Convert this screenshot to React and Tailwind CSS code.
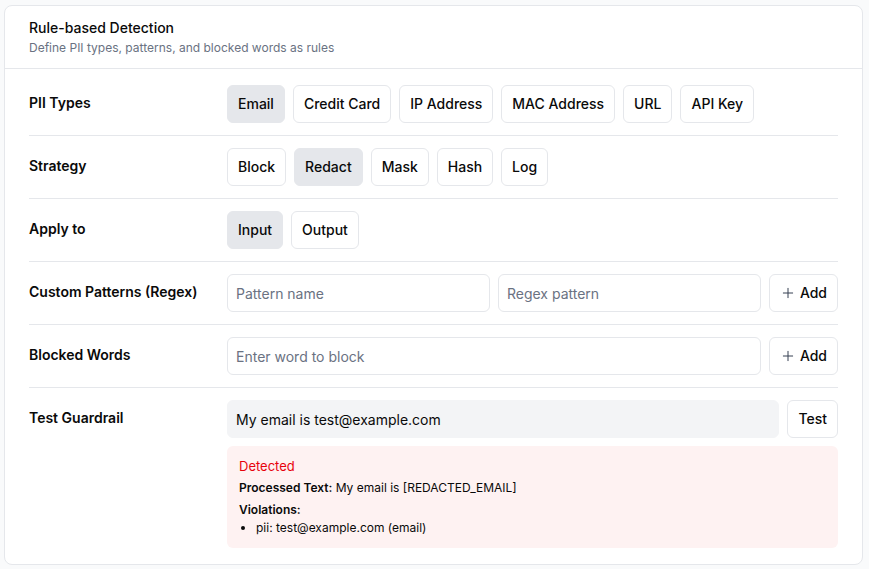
import React from 'react';
import { Plus } from 'lucide-react';

const piiTypes = ['Email', 'Credit Card', 'IP Address', 'MAC Address', 'URL', 'API Key'];
const strategies = ['Block', 'Redact', 'Mask', 'Hash', 'Log'];
const targets = ['Input', 'Output'];

const Chip = ({ label, active }) => (
    <button
        className={`h-[38px] px-2.5 rounded-md text-sm font-medium text-neutral-950 border ${active
            ? 'bg-gray-200 border-gray-200'
            : 'bg-white border-gray-200'
            }`}
    >
        {label}
    </button>
);

const Row = ({ label, last = false, children }) => (
    <div className={`flex items-start py-3 ${last ? 'pb-4' : 'border-b border-gray-200'}`}>
        <div className="w-[198px] shrink-0 pt-2 text-sm leading-5 font-semibold text-neutral-950">{label}</div>
        <div className="flex-1 min-w-0">{children}</div>
    </div>
);

const TextInput = ({ placeholder }) => (
    <input
        placeholder={placeholder}
        className="h-[38px] flex-1 min-w-0 px-2 rounded-md border border-gray-200 bg-white text-sm text-neutral-950 placeholder:text-gray-500 outline-none"
    />
);

const AddButton = () => (
    <button className="h-[38px] px-2.5 flex items-center gap-1 rounded-md border border-gray-200 bg-white text-sm font-medium text-neutral-950">
        <Plus size={16} strokeWidth={1.5} className="text-gray-700" />
        Add
    </button>
);

export default function App() {
    return (
        <div className="min-h-screen bg-gray-50 pl-[4px] pr-[6px] pt-[5px] pb-[5px]" style={{ fontFamily: 'Inter, "Noto Sans", sans-serif' }}>
            <div className="bg-white border border-gray-200 rounded-lg">
                {/* Header */}
                <div className="px-6 pt-3 pb-3 border-b border-gray-200">
                    <h2 className="text-sm leading-5 font-medium text-neutral-950">Rule-based Detection</h2>
                    <p className="mt-0.5 text-xs leading-4 text-gray-500">Define PII types, patterns, and blocked words as rules</p>
                </div>

                <div className="px-6 pt-1">
                    <Row label="PII Types">
                        <div className="flex flex-wrap gap-2">
                            {piiTypes.map(t => <Chip key={t} label={t} active={t === 'Email'} />)}
                        </div>
                    </Row>

                    <Row label="Strategy">
                        <div className="flex gap-2">
                            {strategies.map(s => <Chip key={s} label={s} active={s === 'Redact'} />)}
                        </div>
                    </Row>

                    <Row label="Apply to">
                        <div className="flex gap-2">
                            {targets.map(t => <Chip key={t} label={t} active={t === 'Input'} />)}
                        </div>
                    </Row>

                    <Row label="Custom Patterns (Regex)">
                        <div className="flex gap-2">
                            <TextInput placeholder="Pattern name" />
                            <TextInput placeholder="Regex pattern" />
                            <AddButton />
                        </div>
                    </Row>

                    <Row label="Blocked Words">
                        <div className="flex gap-2">
                            <TextInput placeholder="Enter word to block" />
                            <AddButton />
                        </div>
                    </Row>

                    <Row label="Test Guardrail" last>
                        <div className="flex flex-col gap-2">
                            <div className="flex gap-2">
                                <input
                                    defaultValue="My email is test@example.com"
                                    className="h-[38px] flex-1 min-w-0 px-2 rounded-md border border-gray-100 bg-gray-100 text-sm text-neutral-950 outline-none"
                                />
                                <button className="h-[38px] px-2.5 rounded-md border border-gray-200 bg-white text-sm font-medium text-neutral-950">Test</button>
                            </div>

                            <div className="rounded-md bg-red-50 px-3 pt-3 pb-3">
                                <div className="text-[13px] leading-4 text-red-600">Detected</div>
                                <div className="mt-1.5 text-xs leading-4 text-neutral-950">
                                    <span className="font-semibold">Processed Text:</span> My email is [REDACTED_EMAIL]
                                </div>
                                <div className="mt-1.5 text-xs leading-4 font-semibold text-neutral-950">Violations:</div>
                                <ul className="mt-0.5 list-disc pl-[17px] text-xs leading-4 text-neutral-950">
                                    <li>pii: test@example.com (email)</li>
                                </ul>
                            </div>
                        </div>
                    </Row>
                </div>
            </div>
        </div>
    );
}
